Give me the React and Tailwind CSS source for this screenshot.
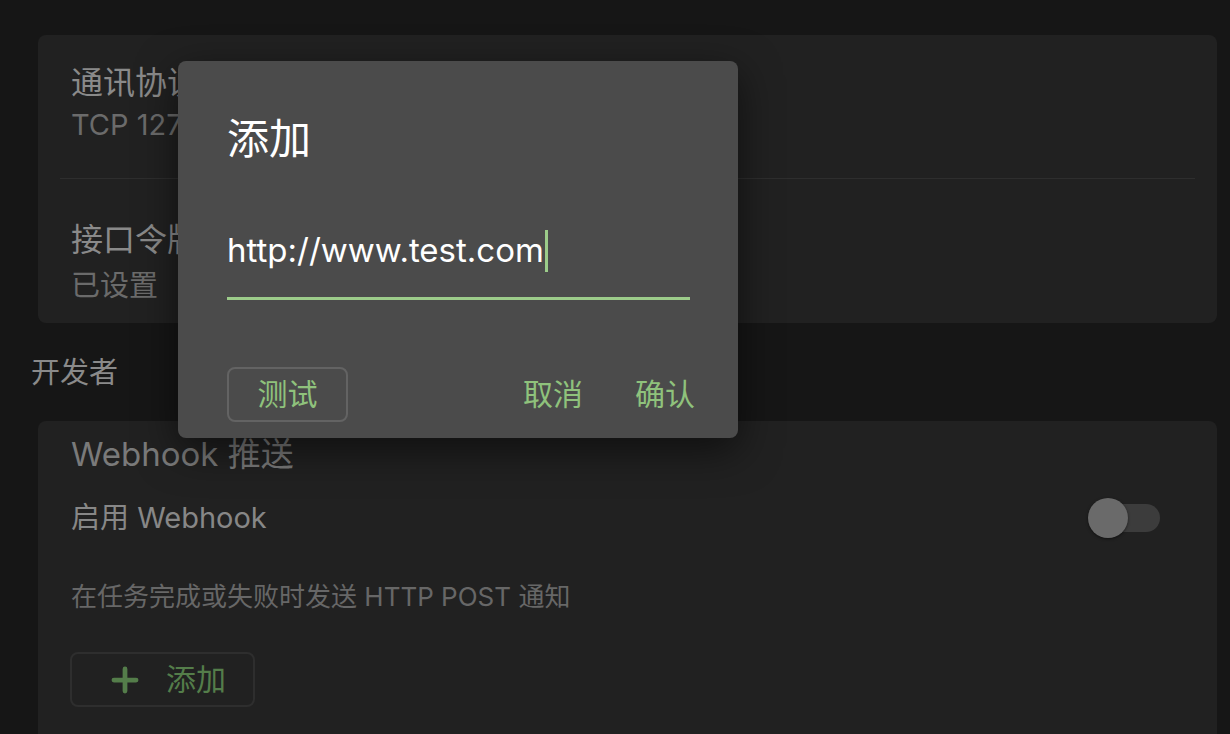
import { Plus } from 'lucide-react';

const FONT = "font-['Inter','Noto_Sans_CJK_SC',sans-serif]";

function ListRow({ title, sub, className, gap }) {
    return (
        <div className={`px-[33px] ${className}`}>
            <div className="text-[32px] leading-[36px] text-[#8a8a8a]">{title}</div>
            <div className={`text-[29px] leading-[36px] text-[#6b6b6b] ${gap}`}>{sub}</div>
        </div>
    );
}

function Toggle() {
    return (
        <div className="relative w-[72px] h-[40px] flex items-center">
            <div className="absolute left-[4px] right-0 h-[28px] rounded-full bg-[#3c3c3c]" />
            <div className="absolute left-0 w-[40px] h-[40px] rounded-full bg-[#6a6a6a] shadow-[0_1px_3px_rgba(0,0,0,0.5)]" />
        </div>
    );
}

function AddDialog() {
    return (
        <div className="absolute left-[178px] top-[61px] w-[560px] h-[377px] rounded-[8px] bg-[#4b4b4b] shadow-[0_12px_40px_rgba(0,0,0,0.55)] pl-[49px] pr-[48px] pt-[54px]">
            <div className="text-[42px] leading-[48px] text-white">添加</div>
            <div className="mt-[66px]">
                <div className="flex items-center h-[44px] text-[33px] text-white">
                    <span>http://www.test.com</span>
                    <span className="ml-[1px] w-[3px] h-[42px] bg-[#9ccc8a]" />
                </div>
                <div className="mt-[24px] h-[3px] bg-[#9ccc8a]" />
            </div>
            <div className="mt-[67px] flex items-center">
                <button className="w-[121px] h-[55px] rounded-[8px] border-2 border-[#636363] text-[30px] text-[#8fc27c] flex items-center justify-center">
                    测试
                </button>
                <div className="flex-1" />
                <span className="text-[30px] text-[#8fc27c]">取消</span>
                <span className="ml-[52px] mr-[-5px] text-[30px] text-[#8fc27c]">确认</span>
            </div>
        </div>
    );
}

export default function App() {
    return (
        <div className={`relative w-[1230px] h-[734px] overflow-hidden bg-[#161616] ${FONT}`}>
            <div className="-mt-[33px] pl-[38px] pr-[13px]">
                <div className="-ml-[7px] text-[29px] leading-[40px] text-[#8a8a8a]">常规</div>
                <div className="mt-[28px] rounded-[8px] bg-[#212121]">
                    <ListRow title="通讯协议" sub="TCP 127.0.0.1:6800" className="pt-[30px] h-[143px]" gap="mt-[6px]" />
                    <div className="mx-[22px] h-px bg-[#2e2e2e]" />
                    <ListRow title="接口令牌" sub="已设置" className="pt-[43px] h-[144px]" gap="mt-[10px]" />
                </div>
                <div className="mt-[30px] -ml-[7px] text-[29px] leading-[40px] text-[#8a8a8a]">开发者</div>
                <div className="mt-[28px] h-[340px] rounded-[8px] bg-[#212121] pl-[33px] pr-[57px] pt-[15px]">
                    <div className="text-[33px] leading-[36px] text-[#7a7a7a]">Webhook 推送</div>
                    <div className="mt-[26px] flex items-center justify-between">
                        <span className="text-[29px] leading-[40px] text-[#878787]">启用 Webhook</span>
                        <Toggle />
                    </div>
                    <div className="mt-[39px] text-[26px] leading-[40px] text-[#676767]">在任务完成或失败时发送 HTTP POST 通知</div>
                    <button className="mt-[35px] -ml-px w-[185px] h-[55px] rounded-[8px] border-2 border-[#2e2e2e] flex items-center pl-[34px] gap-[22px] text-[30px] text-[#547d4a]">
                        <Plus className="w-[38px] h-[38px]" strokeWidth={3} />
                        <span>添加</span>
                    </button>
                </div>
            </div>
            <AddDialog />
        </div>
    );
}
